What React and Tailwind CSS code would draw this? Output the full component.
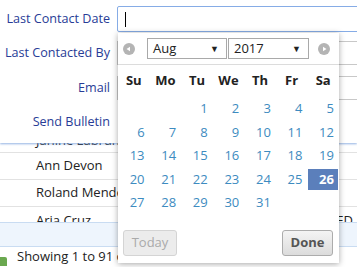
import React from 'react';

const weeks = [
  [null, null, 1, 2, 3, 4, 5],
  [6, 7, 8, 9, 10, 11, 12],
  [13, 14, 15, 16, 17, 18, 19],
  [20, 21, 22, 23, 24, 25, 26],
  [27, 28, 29, 30, 31, null, null],
];

const dayNames = ['Su', 'Mo', 'Tu', 'We', 'Th', 'Fr', 'Sa'];

const NavCircle = ({ dir }) => (
  <svg width="12" height="12" viewBox="0 0 12 12" className="shrink-0">
    <circle cx="6" cy="6" r="6" fill="#b4b4b4" />
    {dir === 'prev' ? (
      <path d="M3.5 6 L7 3.8 L7 8.2 Z" fill="#fff" />
    ) : (
      <path d="M8.5 6 L5 3.8 L5 8.2 Z" fill="#fff" />
    )}
  </svg>
);

const Select = ({ value, width }) => (
  <div
    className={`flex items-center justify-between h-[21px] border border-[#a9a9a9] bg-white pl-[5px] pr-[7px] text-[13px] text-[#222] ${width}`}
  >
    <span>{value}</span>
    <span className="text-[9px] text-[#222]">▼</span>
  </div>
);

const DatePicker = () => (
  <div className="absolute left-[118px] top-[33px] w-[221px] h-[230px] bg-white z-20 shadow-[0_1px_6px_rgba(0,0,0,0.35)]">
    {/* header */}
    <div className="flex items-center h-[32px] border-b border-[#dcdcdc] pl-[5px]">
      <NavCircle dir="prev" />
      <div className="ml-[12px] flex gap-[1px]">
        <Select value="Aug" width="w-[80px]" />
        <Select value="2017" width="w-[81px]" />
      </div>
      <div className="ml-[9px]">
        <NavCircle dir="next" />
      </div>
    </div>

    {/* days */}
    <div className="grid grid-cols-7">
      {dayNames.map((d) => (
        <div key={d} className="h-[32px] flex items-center justify-center font-bold text-[13px] text-[#222]">
          {d}
        </div>
      ))}
      {weeks.flat().map((d, i) => (
        <div key={i} className="h-[23.5px] p-[1px]">
          {d && (
            <div
              className={`h-full flex items-center justify-end pr-[4px] text-[13px] ${
                d === 26 ? 'bg-[#5b7fbb] text-white font-bold' : 'text-[#3d8bc0]'
              }`}
            >
              {d}
            </div>
          )}
        </div>
      ))}
    </div>

    {/* buttons */}
    <div className="flex justify-between pl-[5px] pr-[6px] mt-[15px]">
      <button className="w-[54px] h-[26px] rounded-[3px] border border-[#d4d4d4] bg-[#ececec] text-[13px] text-[#aaa]">
        Today
      </button>
      <button className="w-[51px] h-[26px] rounded-[3px] border border-[#acacac] bg-gradient-to-b from-[#f4f4f4] to-[#dcdcdc] text-[13px] font-bold text-[#555]">
        Done
      </button>
    </div>
  </div>
);

const FieldRow = ({ label, className, children }) => (
  <div className={`flex items-center ${className}`}>
    <div className="w-[110px] shrink-0 text-right text-[12.6px] text-[#283c96] whitespace-nowrap">{label}</div>
    <div className="ml-[7px] flex-1">{children}</div>
  </div>
);

export default function App() {
  return (
    <div
      className="relative w-[357px] h-[267px] overflow-hidden bg-white"
      style={{ fontFamily: '"Open Sans", "Liberation Sans", sans-serif' }}
    >
      {/* form */}
      <div className="relative z-10 h-[143px] bg-white pt-[6px] shadow-[0_1px_2px_rgba(120,160,220,0.8)]">
        <FieldRow label="Last Contact Date" className="h-[26px]">
          <div className="h-[26px] w-[260px] rounded-[2px] border border-[#86ace6] flex items-center pl-[7px]">
            <div className="w-[1px] h-[15px] bg-black" />
          </div>
        </FieldRow>
        <FieldRow label="Last Contacted By" className="h-[24px] mt-[9px]">
          <div className="h-[24px] w-[260px] border border-[#c8c8c8]" />
        </FieldRow>
        <FieldRow label="Email" className="h-[24px] mt-[11px]">
          <div className="h-[24px] w-[260px] border border-[#c8c8c8]" />
        </FieldRow>
        <FieldRow label="Send Bulletin" className="h-[24px] mt-[10px]" />
      </div>

      {/* grid */}
      <div className="text-[13px] text-[#222]">
        <div className="h-[10px] overflow-hidden border-b border-[#e2e2e2]">
          <div className="mt-[-16px] h-[26px] leading-[26px] pl-[36px]">Janine Labrune</div>
        </div>
        <div className="h-[27px] flex items-center pl-[36px] border-b border-[#e2e2e2]">Ann Devon</div>
        <div className="h-[27px] flex items-center pl-[36px] border-b border-[#e2e2e2]">Roland Mendel</div>
        <div className="h-[15px] overflow-hidden">
          <div className="h-[27px] flex items-center pl-[36px] justify-between pr-[4px]">
            <span>Aria Cruz</span>
            <span>ED</span>
          </div>
        </div>
        <div className="h-[25px] bg-[#eef5fd] border-y border-[#c9dcf2]" />
        <div className="h-[20px] flex items-center">
          <div className="w-[7px] h-[9px] mt-[8px] bg-[#6aa84f] rounded-tr-[2px]" />
          <span className="ml-[10px]">Showing 1 to 91 of 91 total records</span>
        </div>
      </div>

      <DatePicker />
    </div>
  );
}
